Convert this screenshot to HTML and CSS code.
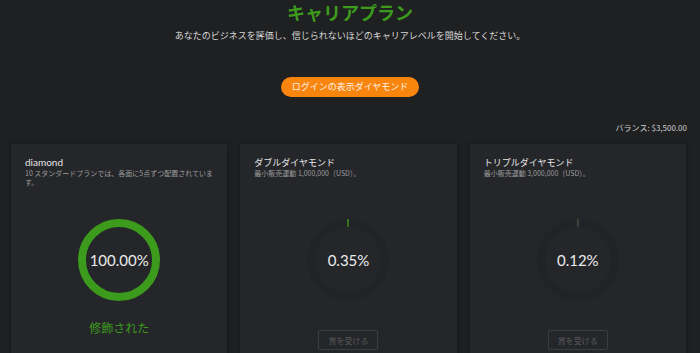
FILE: index.html
```html
<!DOCTYPE html>
<html lang="ja">
<head>
	<meta charset="utf-8">
	<title>キャリアプラン</title>
	<link rel="stylesheet" href="styles.css">
</head>
<body>
<div id="page">
	<header class="intro">
		<h1>キャリアプラン</h1>
		<p class="lead">あなたのビジネスを評価し、信じられないほどのキャリアレベルを開始してください。</p>
		<button class="btnOrange" type="button">ログインの表示ダイヤモンド</button>
	</header>

	<p class="balance">バランス: $3,500.00</p>

	<div class="plans">
		<!-- diamond -->
		<div class="plan">
			<div class="planHead">
				<h3 class="latin">diamond</h3>
				<p>10 スタンダードプランでは、各面に5点ずつ配置されています。</p>
			</div>
			<div class="ring">
				<svg width="82" height="82" viewBox="0 0 82 82">
					<circle cx="41" cy="41" r="37" class="track"></circle>
					<circle cx="41" cy="41" r="37" class="bar" stroke-dasharray="232.5 232.5" transform="rotate(-90 41 41)"></circle>
				</svg>
				<span class="pct">100.00%</span>
			</div>
			<p class="done">修飾された</p>
		</div>

		<!-- double -->
		<div class="plan">
			<div class="planHead">
				<h3>ダブルダイヤモンド</h3>
				<p>最小販売運動 1,000,000（USD）。</p>
			</div>
			<div class="ring">
				<svg width="82" height="82" viewBox="0 0 82 82">
					<circle cx="41" cy="41" r="37" class="track"></circle>
					<circle cx="41" cy="41" r="37" class="bar" stroke-dasharray="1.4 240" transform="rotate(-91 41 41)"></circle>
				</svg>
				<span class="pct">0.35%</span>
			</div>
			<button class="btnClaim" type="button">賞を受ける</button>
		</div>

		<!-- triple -->
		<div class="plan">
			<div class="planHead">
				<h3>トリプルダイヤモンド</h3>
				<p>最小販売運動 3,000,000（USD）。</p>
			</div>
			<div class="ring">
				<svg width="82" height="82" viewBox="0 0 82 82">
					<circle cx="41" cy="41" r="37" class="track"></circle>
					<circle cx="41" cy="41" r="37" class="bar dim" stroke-dasharray="1.2 240" transform="rotate(-91 41 41)"></circle>
				</svg>
				<span class="pct">0.12%</span>
			</div>
			<button class="btnClaim" type="button">賞を受ける</button>
		</div>
	</div>
</div>
</body>
</html>
```

FILE: styles.css
```css
html, body {
	margin: 0;
	background-color: #1f2022;
	overflow: hidden;
}
body {
	font-family: "Noto Sans CJK JP", "Noto Sans", sans-serif;
	color: #dcdcdc;
}
#page { width: 700px; }
.intro { text-align: center; }
h1 {
	margin: 0;
	font-size: 18px;
	line-height: 24px;
	font-weight: bold;
	color: #3c9a1c;
}
.lead {
	margin: 6px 0 0;
	font-size: 9px;
	line-height: 12px;
	color: #d8d8d8;
}
.btnOrange {
	margin-top: 35px;
	height: 20px;
	padding: 0 11px;
	border: none;
	border-radius: 10px;
	background-color: #f7850e;
	color: #fff3e6;
	font-family: "Noto Sans CJK JP", sans-serif;
	font-size: 9px;
	line-height: 20px;
}
.balance {
	margin: 25px 13px 0 0;
	text-align: right;
	font-size: 8px;
	line-height: 12px;
	color: #d0d0d0;
}
.plans {
	display: grid;
	grid-template-columns: repeat(3, 1fr);
	gap: 13px;
	margin-top: 10px;
	padding: 0 14px 0 11px;
}
.plan {
	display: flex;
	flex-direction: column;
	align-items: center;
	height: 240px;
	padding: 12px 14px;
	background-color: #25262a;
	box-shadow: 0 0 5px rgba(0, 0, 0, .35);
}
.planHead {
	align-self: stretch;
	height: 51px;
}
.planHead h3 {
	margin: 0;
	font-size: 9px;
	line-height: 13px;
	font-weight: normal;
	color: #e6e6e6;
}
.planHead h3.latin {
	font-family: Lato, "Noto Sans", sans-serif;
	font-size: 10px;
}
.planHead p {
	margin: 0;
	font-size: 7px;
	line-height: 9px;
	color: #9c9c9c;
}
.ring {
	position: relative;
	width: 82px;
	height: 82px;
	margin-top: 12px;
}
.ring svg { display: block; }
.ring circle { fill: none; stroke-width: 8; }
.ring .track { stroke: #222326; }
.ring .bar { stroke: #3c9a1c; }
.ring .bar.dim { stroke: #4f5a4a; }
.pct {
	position: absolute;
	left: 0;
	right: 0;
	top: 31px;
	text-align: center;
	font-family: Lato, "Noto Sans", sans-serif;
	font-size: 15px;
	line-height: 20px;
	color: #ececec;
}
.done {
	margin: 19px 0 0;
	font-size: 12px;
	line-height: 16px;
	color: #3c9a1c;
}
.btnClaim {
	margin-top: 29px;
	width: 60px;
	height: 20px;
	padding: 0;
	border: solid 1px #3a3c40;
	border-radius: 2px;
	background: transparent;
	color: #56585c;
	font-family: "Noto Sans CJK JP", sans-serif;
	font-size: 8px;
}
```
